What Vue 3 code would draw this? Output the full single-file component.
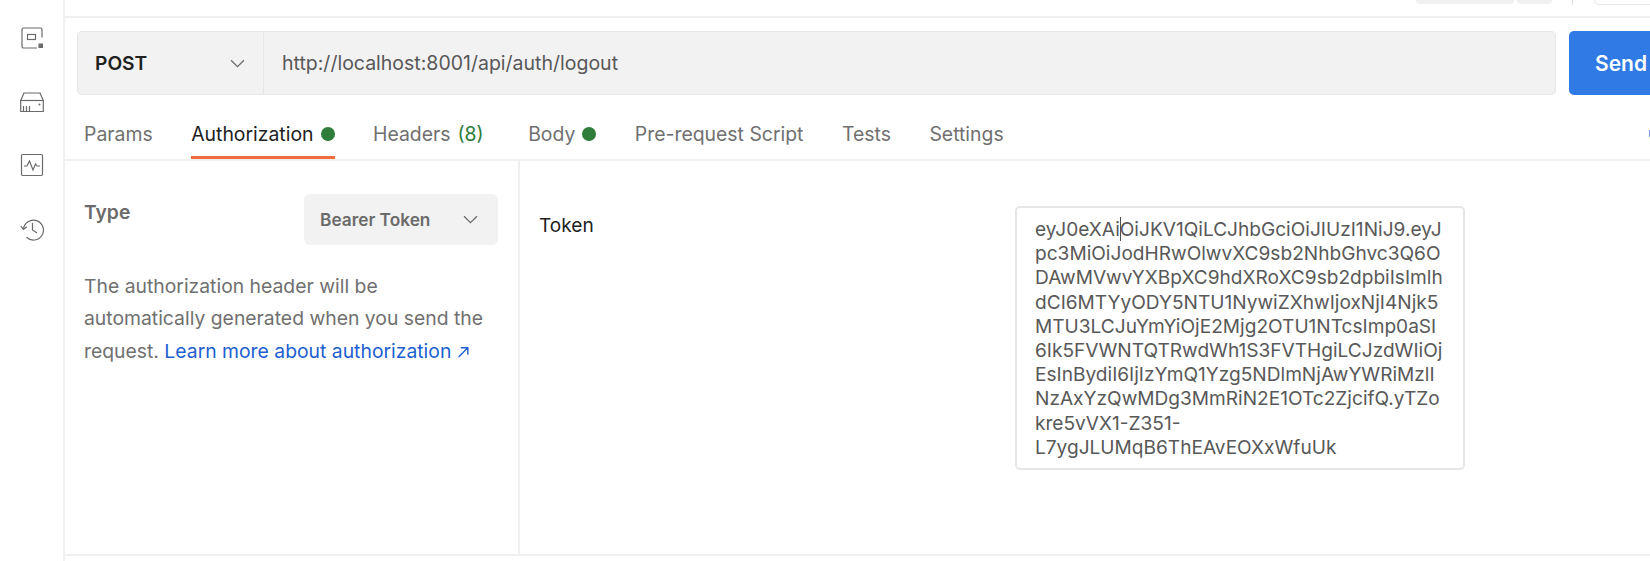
<script setup>
const tabs = [
  { label: 'Params' },
  { label: 'Authorization', dot: true, active: true },
  { label: 'Headers', count: '(8)' },
  { label: 'Body', dot: true },
  { label: 'Pre-request Script' },
  { label: 'Tests' },
  { label: 'Settings' },
]
const tokenLines = [
  'pc3MiOiJodHRwOlwvXC9sb2NhbGhvc3Q6O',
  'DAwMVwvYXBpXC9hdXRoXC9sb2dpbiIsImlh',
  'dCI6MTYyODY5NTU1NywiZXhwIjoxNjI4Njk5',
  'MTU3LCJuYmYiOjE2Mjg2OTU1NTcsImp0aSI',
  '6Ik5FVWNTQTRwdWh1S3FVTHgiLCJzdWIiOj',
  'EsInBydiI6IjIzYmQ1Yzg5NDlmNjAwYWRiMzlI',
  'NzAxYzQwMDg3MmRiN2E1OTc2ZjcifQ.yTZo',
  'kre5vVX1-Z351-',
  'L7ygJLUMqB6ThEAvEOXxWfuUk',
]
</script>

<template>
  <div class="app">
    <aside class="rail">
      <svg class="ico" viewBox="0 0 24 24" fill="none" stroke="#6b6b6b" stroke-width="1.2">
        <path d="M22 11.500V3.600A1.600 1.600 0 0 0 20.400 2H3.600A1.600 1.600 0 0 0 2 3.600v16.800A1.600 1.600 0 0 0 3.600 22h13.400" />
        <rect x="7.500" y="8.500" width="8" height="5" />
        <rect x="18.500" y="17.500" width="4.500" height="4.500" fill="#6b6b6b" stroke="none" />
      </svg>
      <svg class="ico" viewBox="0 0 24 24" fill="none" stroke="#6b6b6b" stroke-width="1.2">
        <path d="M0.700 21.500V10.500L4 3h16l3.300 7.500V21.500Z" />
        <path d="M0.700 10.500H23.300" />
        <path d="M3.500 16v5.500M6.500 16v5.500M9.500 16v5.500M12.500 21.500H3.500" />
        <circle cx="19.500" cy="14.500" r="1" fill="#6b6b6b" stroke="none" />
      </svg>
      <svg class="ico" viewBox="0 0 24 24" fill="none" stroke="#6b6b6b" stroke-width="1.2">
        <rect x="1.500" y="1.500" width="21" height="21" rx="1.200" />
        <path d="M4 13h3l2.500-5 3.500 9 2.500-6 1.500 2h3" />
      </svg>
      <svg class="ico" viewBox="0 0 24 24" fill="none" stroke="#6b6b6b" stroke-width="1.2">
        <path d="M3.500 12A10 10 0 1 1 6.500 20.300" />
        <path d="M0.800 9.200L3.500 12.500L6.800 9.700" />
        <path d="M12.500 6v7l4.500 3" />
      </svg>
    </aside>

    <main class="main">
      <header class="top">
        <span class="pill pill-a"></span>
        <span class="pill pill-b"></span>
        <span class="sep"></span>
        <span class="box"></span>
      </header>

      <section class="request">
        <div class="urlbar">
          <div class="method">
            <span>POST</span>
            <svg class="chev" viewBox="0 0 14 8" fill="none" stroke="#6b6b6b" stroke-width="1.200"><path d="M1 1l6 6 6-6" /></svg>
          </div>
          <div class="url">http://localhost:8001/api/auth/logout</div>
        </div>
        <button class="send">Send</button>
      </section>

      <nav class="tabs">
        <div v-for="t in tabs" :key="t.label" class="tab" :class="{ active: t.active, counted: t.count }">
          <span>{{ t.label }}</span>
          <span v-if="t.count" class="count">{{ t.count }}</span>
          <span v-if="t.dot" class="dot"></span>
        </div>
        <span class="edge"></span>
      </nav>

      <section class="body">
        <div class="left">
          <div class="type-row">
            <span class="type-label">Type</span>
            <div class="select">
              <span>Bearer Token</span>
              <svg class="chev" viewBox="0 0 14 8" fill="none" stroke="#6b6b6b" stroke-width="1.200"><path d="M1 1l6 6 6-6" /></svg>
            </div>
          </div>
          <p class="help">
            The authorization header will be automatically generated when you send the request.
            <a class="link">Learn more about authorization <svg class="arrow" viewBox="0 0 12 12" fill="none" stroke="#1d5fd1" stroke-width="1.300"><path d="M1.500 11L10 2.500M3.500 2.500H10V9" /></svg></a>
          </p>
        </div>
        <div class="right">
          <label class="token-label">Token</label>
          <div class="token">
            <div>eyJ0eXAi<span class="caret"></span>OiJKV1QiLCJhbGciOiJIUzI1NiJ9.eyJ</div>
            <div v-for="l in tokenLines" :key="l">{{ l }}</div>
          </div>
        </div>
      </section>
    </main>
  </div>
</template>

<style>
html, body { margin: 0; background: #fff; overflow: hidden; }
</style>

<style scoped>
.app {
  display: flex;
  width: 1650px;
  height: 561px;
  overflow: hidden;
  background: #fff;
  font-family: Inter, "Liberation Sans", sans-serif;
  color: #6b6b6b;
}
.rail {
  width: 63px;
  flex: none;
  border-right: 2px solid #f0f0f0;
  display: flex;
  flex-direction: column;
  align-items: center;
  padding-top: 26px;
  gap: 39.500px;
  box-sizing: content-box;
}
.ico { width: 24px; height: 24px; display: block; }
.main { flex: 1; min-width: 0; display: flex; flex-direction: column; }
.top {
  height: 16px;
  flex: none;
  border-bottom: 2px solid #f0f0f0;
  display: flex;
  align-items: flex-start;
  padding-left: 1351px;
}
.pill { height: 4px; background: #f0f0f0; border-radius: 0 0 5px 5px; }
.pill-a { width: 107px; }
.pill-b { width: 38px; margin-left: 3px; }
.sep { width: 1px; height: 5px; background: #e0e0e0; margin-left: 20px; }
.box { width: 60px; height: 4px; margin-left: 21px; border: 1px solid #e6e6e6; border-top: 0; border-right: 0; border-radius: 0 0 0 5px; }
.request {
  display: flex;
  gap: 13px;
  padding: 13px 0 0 12px;
  flex: none;
  width: 1700px;
}
.urlbar {
  width: 1479px;
  height: 64px;
  flex: none;
  box-sizing: border-box;
  display: flex;
  background: #f2f2f2;
  border: 1px solid #e6e6e6;
  border-radius: 5px;
}
.method {
  width: 186px;
  flex: none;
  display: flex;
  align-items: center;
  justify-content: space-between;
  padding: 0 18px 0 17px;
  box-sizing: border-box;
  border-right: 1px solid #e6e6e6;
  font-size: 19.200px;
  font-weight: 600;
  color: #212121;
}
.chev { width: 15px; height: 9px; display: block; }
.url { padding-left: 18px; font-size: 19.500px; line-height: 62px; color: #585858; white-space: nowrap; }
.send {
  width: 130px;
  height: 64px;
  border: 0;
  border-radius: 5px;
  background: #2f7ae5;
  color: #fff;
  font: 600 21px Inter, sans-serif;
  text-align: left;
  padding: 0 0 0 26px;
  flex: none;
}
.tabs {
  flex: none;
  height: 66px;
  box-sizing: border-box;
  display: flex;
  gap: 38.500px;
  padding-left: 19px;
  border-bottom: 2px solid #f0f0f0;
  position: relative;
}
.tab {
  display: flex;
  align-items: center;
  gap: 7px;
  height: 64px;
  padding-top: 13px;
  font-size: 19.400px;
  color: #707070;
  box-sizing: border-box;
  position: relative;
  white-space: nowrap;
}
.tab.counted { margin-right: 6px; }
.tab.active { color: #212121; }
.tab.active::after {
  content: "";
  position: absolute;
  left: 0;
  right: 0;
  bottom: 0;
  height: 3px;
  background: #f26b3a;
}
.count { color: #2f7d3b; }
.dot { width: 14px; height: 14px; border-radius: 50%; background: #2f7d3b; flex: none; }
.edge {
  position: absolute;
  right: 0;
  top: 35px;
  width: 1px;
  height: 7px;
  background: #7f9fe0;
}
.body { flex: 1; display: flex; border-bottom: 2px solid #f0f0f0; margin-bottom: 5px; min-height: 0; }
.left {
  width: 455px;
  flex: none;
  box-sizing: border-box;
  border-right: 2px solid #f0f0f0;
  padding: 33px 20px 0 19px;
}
.type-row { display: flex; justify-content: space-between; align-items: flex-start; }
.type-label { font-size: 19.300px; font-weight: 600; color: #6b6b6b; line-height: 36px; }
.select {
  width: 194px;
  height: 51px;
  box-sizing: border-box;
  border-radius: 6px;
  background: #f2f2f2;
  display: flex;
  align-items: center;
  justify-content: space-between;
  padding: 0 20px 0 16px;
  font-size: 17.300px;
  font-weight: 600;
  color: #6b6b6b;
}
.help { margin: 25px 0 0; font-size: 19.350px; line-height: 32.300px; color: #707070; }
.link { color: #1d5fd1; }
.arrow { width: 13px; height: 13px; }
.right { flex: 1; min-width: 0; display: flex; align-items: flex-start; padding: 45px 0 0 19px; }
.token-label { font-size: 19.100px; line-height: 24px; color: #212121; width: 476px; flex: none; margin-top: 7px; }
.token {
  width: 450px;
  height: 264px;
  flex: none;
  box-sizing: border-box;
  border: 2px solid #e6e6e6;
  border-radius: 5px;
  padding: 9px 18px;
  font-size: 19.100px;
  line-height: 24.200px;
  color: #585858;
  white-space: nowrap;
}
.caret { display: inline-block; width: 1px; height: 24px; margin-right: -1px; background: #505050; vertical-align: top; }
</style>
